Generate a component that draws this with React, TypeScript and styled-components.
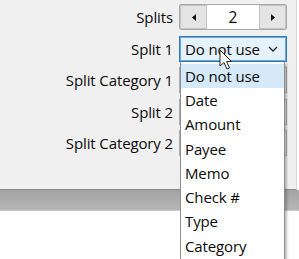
import React from "react";
import styled, { createGlobalStyle } from "styled-components";

const Global = createGlobalStyle`
  html, body { margin: 0; padding: 0; background: #ffffff; }
  body { font-family: "Open Sans", "Noto Sans", Arial, sans-serif; }
`;

const Screen = styled.div`
  position: relative;
  width: 299px;
  height: 259px;
  overflow: hidden;
  background: #ffffff;
`;

const Panel = styled.div`
  height: 190px;
  background: #f0f0f0;
  border-bottom: 1px solid #8a8a8a;
  border-right: 1px solid #d8d8d8;
  padding-top: 4px;
  box-sizing: border-box;
  width: 297px;
`;

const Band = styled.div`
  height: 20px;
  background: linear-gradient(#a4a4a4, #b6b6b6);
  border-bottom: 1px solid #cacaca;
`;

const Form = styled.div`
  display: grid;
  grid-template-columns: 173px 108px;
  column-gap: 6px;
  row-gap: 5.5px;
  grid-auto-rows: 26px;
`;

const Label = styled.div`
  font-size: 15px;
  color: #0a0a0a;
  display: flex;
  align-items: center;
  justify-content: flex-end;
  letter-spacing: -0.12px;
`;

const Spinner = styled.div`
  display: flex;
  border: 1px solid #a9a9a9;
  border-radius: 2px;
  background: #fff;
  box-sizing: border-box;
`;

const SpinButton = styled.div`
  width: 27px;
  display: flex;
  align-items: center;
  justify-content: center;
  background: #e4e4e4;
  border: 1px solid #c4c4c4;
  box-sizing: border-box;
`;

const SpinValue = styled.div`
  flex: 1;
  display: flex;
  align-items: center;
  justify-content: center;
  font-size: 15.5px;
  color: #0a0a0a;
`;

const Combo = styled.div<{ $active?: boolean }>`
  display: flex;
  align-items: center;
  justify-content: space-between;
  padding: 0 8px 0 5px;
  box-sizing: border-box;
  border: 1px solid ${(p) => (p.$active ? "#2f7bc0" : "#adadad")};
  box-shadow: ${(p) => (p.$active ? "inset 0 0 0 1px #6aa6dc" : "none")};
  background: ${(p) => (p.$active ? "#e5f1fb" : "#e9e9e9")};
  font-size: 15px;
  color: #0a0a0a;
  letter-spacing: -0.12px;
`;

const Dropdown = styled.div`
  position: absolute;
  left: 180px;
  top: 62px;
  width: 105px;
  height: 210px;
  background: #ffffff;
  border: 1px solid #8e8e8e;
  border-top: none;
  box-shadow: 2px 2px 2px rgba(0, 0, 0, 0.25);
  box-sizing: border-box;
  padding-top: 1.5px;
`;

const Item = styled.div<{ $selected?: boolean }>`
  height: 24.3px;
  display: flex;
  align-items: center;
  padding-left: 4px;
  font-size: 15px;
  color: #0a0a0a;
  letter-spacing: -0.12px;
  background: ${(p) => (p.$selected ? "#d6e9f8" : "transparent")};
`;

const Cursor = styled.svg`
  position: absolute;
  left: 219px;
  top: 49px;
`;

const options = ["Do not use", "Date", "Amount", "Payee", "Memo", "Check #", "Type", "Category"];

const Chevron = () => (
  <svg width="10" height="6" viewBox="0 0 10 6">
    <path d="M1 1 L5 5 L9 1" fill="none" stroke="#222" strokeWidth="1.3" />
  </svg>
);

const Arrow = ({ dir }: { dir: "l" | "r" }) => (
  <svg width="4" height="7" viewBox="0 0 4 7">
    <path d={dir === "l" ? "M4 0 L0 3.5 L4 7 Z" : "M0 0 L4 3.5 L0 7 Z"} fill="#111" />
  </svg>
);

export default function App() {
  return (
    <Screen>
      <Global />
      <Panel>
        <Form>
          <Label>Splits</Label>
          <Spinner>
            <SpinButton>
              <Arrow dir="l" />
            </SpinButton>
            <SpinValue>2</SpinValue>
            <SpinButton>
              <Arrow dir="r" />
            </SpinButton>
          </Spinner>
          <Label>Split 1</Label>
          <Combo $active>
            <span>Do not use</span>
            <Chevron />
          </Combo>
          <Label>Split Category 1</Label>
          <Combo />
          <Label>Split 2</Label>
          <Combo />
          <Label>Split Category 2</Label>
          <Combo />
        </Form>
      </Panel>
      <Band />
      <Dropdown>
        {options.map((o, i) => (
          <Item key={o} $selected={i === 0}>
            {o}
          </Item>
        ))}
      </Dropdown>
      <Cursor width="14" height="22" viewBox="0 0 14 22">
        <path
          d="M1 1 L1 17 L5 13.5 L8 20 L10.5 19 L7.6 12.6 L12.5 12.5 Z"
          fill="#fff"
          stroke="#222"
          strokeWidth="1"
          strokeLinejoin="round"
        />
      </Cursor>
    </Screen>
  );
}
